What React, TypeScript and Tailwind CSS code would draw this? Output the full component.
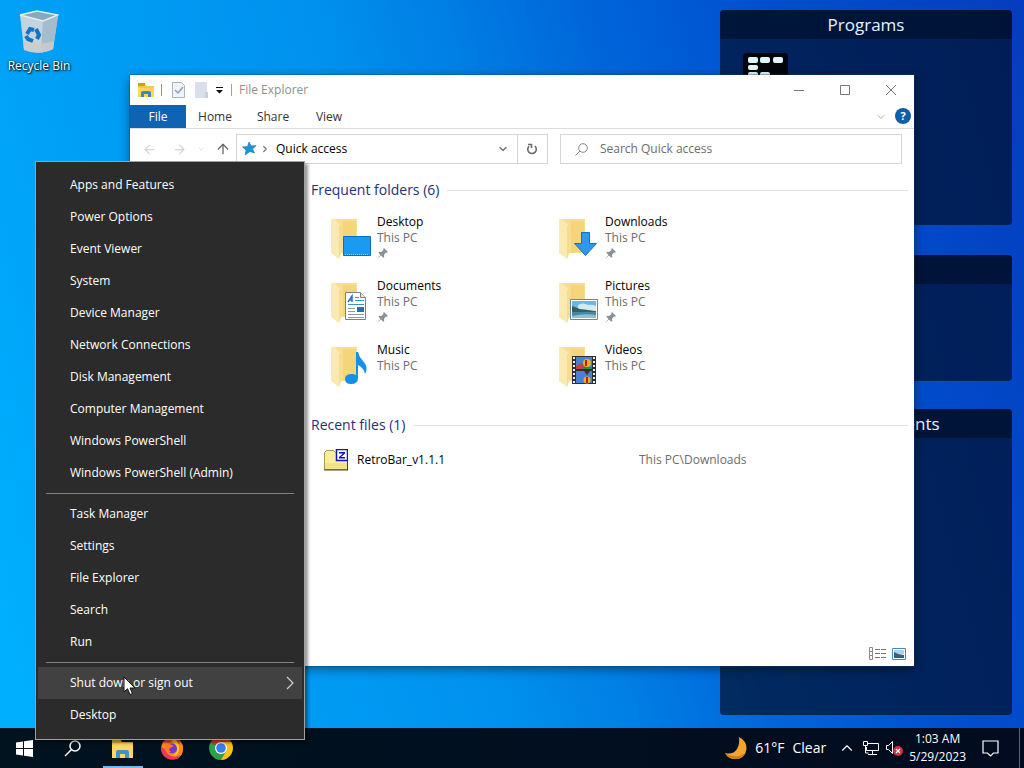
import { ReactNode } from 'react'
import { ArrowLeft, ArrowRight, ArrowUp, ChevronDown, ChevronRight, ChevronUp } from 'lucide-react'

type FolderKind = 'desktop' | 'downloads' | 'documents' | 'pictures' | 'music' | 'videos'

const menuGroups = [
    [
        'Apps and Features',
        'Power Options',
        'Event Viewer',
        'System',
        'Device Manager',
        'Network Connections',
        'Disk Management',
        'Computer Management',
        'Windows PowerShell',
        'Windows PowerShell (Admin)'
    ],
    ['Task Manager', 'Settings', 'File Explorer', 'Search', 'Run'],
    ['Shut down or sign out', 'Desktop']
]

const folders: { name: string; kind: FolderKind; pinned: boolean }[] = [
    { name: 'Desktop', kind: 'desktop', pinned: true },
    { name: 'Downloads', kind: 'downloads', pinned: true },
    { name: 'Documents', kind: 'documents', pinned: true },
    { name: 'Pictures', kind: 'pictures', pinned: true },
    { name: 'Music', kind: 'music', pinned: false },
    { name: 'Videos', kind: 'videos', pinned: false }
]

function RecycleBinIcon() {
    return (
        <svg width="40" height="44" viewBox="0 0 40 44">
            <path d="M1 5 L5 40 Q20 46 34 39 L39 6 L20 10Z" fill="#c3d3df" />
            <path d="M24 9 L39 6 L34 39 L22 43Z" fill="#a5bccd" />
            <path d="M4 31 L5 40 Q20 46 34 39 L35 31 Q20 36 4 31Z" fill="#cfccc9" opacity=".8" />
            <path d="M1 5 L18 1 L39 5 L24 11Z" fill="#88a9bd" stroke="#e6eef4" strokeWidth="1.4" />
            <g fill="none" stroke="#1272c4" strokeWidth="4">
                <path d="M8 24 L11 19 L15 20" />
                <path d="M17 19 L20 25 L18 29" />
                <path d="M14 31 L9 29 L7 26" />
            </g>
        </svg>
    )
}

function ExplorerSmallIcon() {
    return (
        <svg width="16" height="15" viewBox="0 0 16 15">
            <path d="M0 1h7l1 2h8v11H0z" fill="#f6c945" />
            <path d="M0 0h7v3H0z" fill="#d79a1a" />
            <path d="M0 5h16v9H0z" fill="#fbd95f" />
            <path d="M3 14V10q0-2 2-2h6q2 0 2 2v4h-3v-3H6v3z" fill="#3f86bd" />
        </svg>
    )
}

function FolderBase({ children }: { children: ReactNode }) {
    return (
        <svg width="42" height="42" viewBox="0 0 42 42">
            <path d="M3 1h23v34H3z" fill="#f7dd8c" />
            <path d="M12 3h13v31H12z" fill="#f3d071" opacity=".6" />
            <path d="M0 1h3l7 6v28l-2 6L0 35z" fill="#fbeab0" />
            <path d="M8 8l2-1v28l-2 6z" fill="#f4dc92" />
            {children}
        </svg>
    )
}

function FolderIcon({ kind }: { kind: FolderKind }) {
    if (kind === 'desktop') {
        return (
            <FolderBase>
                <path d="M12.500 18.500h27v19h-27z" fill="#1b9af2" stroke="#0b6fc0" />
                <path d="M14 36.500h24" stroke="#8fd0ff" strokeDasharray="1 1" />
            </FolderBase>
        )
    }
    if (kind === 'downloads') {
        return (
            <FolderBase>
                <path d="M22.500 14.500h8v11h7L26.500 37.500 15.500 25.500h7z" fill="#2f98ea" stroke="#1b6fb8" />
            </FolderBase>
        )
    }
    if (kind === 'documents') {
        return (
            <FolderBase>
                <path d="M14.500 10.500h15l5 5v22h-20z" fill="#fff" stroke="#7c8085" />
                <path d="M29.500 10.500v5h5" fill="#e6e8ea" stroke="#7c8085" />
                <path d="M17 20l4-6v6M18.500 18h3" fill="none" stroke="#1f7cc4" strokeWidth="1.500" />
                <path d="M24 15.500h4M24 18.500h9M17 22.500h16" stroke="#3f8fc9" />
                <path d="M17 26.500h7M17 29.500h7M17 32.500h16M17 35.500h16" stroke="#8a9bab" />
                <path d="M26 25h7v5h-7z" fill="#2f6ea3" />
            </FolderBase>
        )
    }
    if (kind === 'pictures') {
        return (
            <FolderBase>
                <path d="M11.500 17.500h27v20h-27z" fill="#fff" stroke="#6d8799" />
                <path d="M13 19h24v9H13z" fill="#6eb5ea" />
                <path d="M19 23q5-3 10 0 4-1 8 1v4H19z" fill="#d3ebf8" />
                <path d="M13 24l8 3 16 2v2H13z" fill="#2f6552" />
                <path d="M13 30h24v6H13z" fill="#4787a5" />
                <path d="M13 34q12-3 24-1v3H13z" fill="#8dbfd0" />
            </FolderBase>
        )
    }
    if (kind === 'music') {
        return (
            <FolderBase>
                <path d="M25 6h2q1 5 5 9 6 6 2 13-1-6-7-9v13q0 6-7 6-6 0-6-5t7-5q2 0 4 1z" fill="#1590e8" />
            </FolderBase>
        )
    }
    return (
        <FolderBase>
            <path d="M13 10h24v28H13z" fill="#2d2f33" />
            <path d="M17 11h16v12H17z" fill="#4a7fd6" />
            <path d="M17 25h16v12H17z" fill="#4a7fd6" />
            <path d="M17 20l6-3 4 3v3H17z" fill="#c4423f" />
            <circle cx="28" cy="17" r="4" fill="#e8b421" />
            <path d="M26 14h2v6h-2z" fill="#a52720" />
            <path d="M24 21h9v2h-9z" fill="#2f8b3c" />
            <circle cx="28" cy="34" r="3.500" fill="#e8b421" />
            <path d="M27 31h2v6h-2z" fill="#a52720" />
            <path d="M25 25h6l-3 4z" fill="#5b2416" />
            <path d="M15 11v27M35 11v27" stroke="#e9edf0" strokeWidth="2" strokeDasharray="2 2" />
        </FolderBase>
    )
}

function PinIcon() {
    return (
        <svg width="11" height="11" viewBox="0 0 11 11" fill="#8a8f94" className="mt-0.5">
            <path d="M7 0l4 4-1 .8-1-.3-2 2.200.2 2-1 1L4 7.500 0 11l3.500-4L1.300 4.800l1-1 2 .2L6.500 2 6.200 1z" />
        </svg>
    )
}

function GroupHeading({ children }: { children: ReactNode }) {
    return (
        <div className="flex h-6 items-center pr-1.5">
            <ChevronDown size={10} className="text-[#404040]" />
            <h2 className="ml-[5px] text-sm leading-6 text-[#1e2f7c]">{children}</h2>
            <div className="ml-2 h-px flex-1 bg-[#e0e2e6]" />
        </div>
    )
}

function TitleBar() {
    return (
        <header className="flex h-[30px] shrink-0 items-center pl-2">
            <ExplorerSmallIcon />
            <div className="ml-[7px] h-3 w-px bg-[#9a9480]" />
            <button aria-label="Properties" className="ml-2.5">
                <svg width="13" height="16" viewBox="0 0 13 16" fill="none">
                    <path d="M.5.5h9l3 3v12H.5z" fill="#f0f4f8" stroke="#a8b4c0" />
                    <path d="M3 8l3 3 5-6" stroke="#8da0b4" strokeWidth="1.500" />
                </svg>
            </button>
            <button aria-label="New folder" className="ml-2.5">
                <svg width="14" height="16" viewBox="0 0 14 16">
                    <path d="M0 0h12v16H0z" fill="#d9e0ea" />
                    <path d="M10 10h3v6h-3z" fill="#c9d0da" />
                </svg>
            </button>
            <button aria-label="Customize Quick Access Toolbar" className="ml-[7px]">
                <svg width="7" height="7" viewBox="0 0 7 7">
                    <path d="M0 0h7v1H0zM0 3h7L3.500 6.500z" fill="#111" />
                </svg>
            </button>
            <div className="ml-2 h-3 w-px bg-[#a0a0a0]" />
            <h1 className="ml-[7px] text-xs text-[#8f8f8f]">File Explorer</h1>
            <div className="ml-auto flex">
                <button aria-label="Minimize" className="flex h-7 w-[46px] items-center justify-center">
                    <svg width="10" height="10" viewBox="0 0 10 10"><path d="M0 5.500h10" stroke="#777" /></svg>
                </button>
                <button aria-label="Maximize" className="flex h-7 w-[46px] items-center justify-center">
                    <svg width="10" height="10" viewBox="0 0 10 10"><path d="M.5.5h9v9h-9z" fill="none" stroke="#777" /></svg>
                </button>
                <button aria-label="Close" className="flex h-7 w-[46px] items-center justify-center">
                    <svg width="10" height="10" viewBox="0 0 10 10"><path d="M0 0l10 10M10 0L0 10" stroke="#777" /></svg>
                </button>
            </div>
        </header>
    )
}

function AddressRow() {
    return (
        <div className="flex shrink-0 items-center pt-[5px] pr-3 pl-3">
            <button aria-label="Back" className="text-[#d4d4d4]"><ArrowLeft size={15} /></button>
            <button aria-label="Forward" className="ml-[15px] text-[#d4d4d4]"><ArrowRight size={15} /></button>
            <button aria-label="Recent locations" className="ml-2.5 text-[#d4d4d4]"><ChevronDown size={8} /></button>
            <button aria-label="Up" className="ml-2.5 text-[#6b6b6b]"><ArrowUp size={16} /></button>
            <div className="ml-[5px] flex h-[30px] flex-[286] items-center border border-[#d6d6d6] pl-1">
                <svg width="16" height="16" viewBox="0 0 16 16">
                    <path d="M8 1l2 4 5-.5-3.500 3.500 2 4-4.500-1.500L4 14l1-5L1.500 6l5-.5z" fill="#1b94dc" stroke="#1272b4" strokeWidth=".6" />
                </svg>
                <ChevronRight size={10} strokeWidth={3} className="ml-[3px] text-[#7a7a7a]" />
                <input aria-label="Address" defaultValue="Quick access" className="ml-1.5 w-0 flex-1 bg-transparent text-xs text-black outline-none" />
                <ChevronDown size={12} strokeWidth={3} className="mr-2 text-[#7a7a7a]" />
            </div>
            <button aria-label="Refresh" className="flex h-[30px] w-[30px] items-center justify-center border border-l-0 border-[#d6d6d6]">
                <svg width="12" height="12" viewBox="0 0 12 12" fill="none" stroke="#6b6b6b" strokeWidth="1.600">
                    <path d="M8.800 3A4.300 4.300 0 1 1 3 3.200" />
                    <path d="M2 1.500h3.500V5" />
                </svg>
            </button>
            <label className="ml-3 flex h-[30px] flex-[338] items-center border border-[#d6d6d6] pl-3.5">
                <svg width="13" height="13" viewBox="0 0 13 13" fill="none" stroke="#858585">
                    <circle cx="8" cy="5" r="4.300" />
                    <path d="M5 8l-4.500 4.500" />
                </svg>
                <input type="search" placeholder="Search Quick access" aria-label="Search" className="ml-3 w-0 flex-1 bg-transparent text-xs outline-none placeholder:text-[#6d6d6d]" />
            </label>
        </div>
    )
}

function ExplorerWindow() {
    return (
        <section className="absolute top-[75px] right-[110px] bottom-[62px] left-[130px] flex flex-col bg-white shadow-[0_0_0_1px_rgba(20,70,120,0.35),0_3px_10px_rgba(0,0,0,0.45)]">
            <TitleBar />
            <nav className="flex h-6 shrink-0 border-b border-[#dcdcdc] text-xs text-[#333]">
                <button className="w-14 bg-[#0f63b3] text-white">File</button>
                <button className="w-[58px]">Home</button>
                <button className="w-[58px]">Share</button>
                <button className="w-[54px]">View</button>
                <button aria-label="Expand the Ribbon" className="ml-auto text-[#aaa]"><ChevronDown size={12} /></button>
                <button aria-label="Help" className="mt-[3px] mr-[3px] ml-2 h-4 w-4 rounded-full bg-[#0d5fa9] text-[11px] leading-4 font-bold text-white">?</button>
            </nav>
            <AddressRow />
            <main className="flex flex-1 flex-col pt-3.5 pl-[166px]">
                <GroupHeading>Frequent folders (6)</GroupHeading>
                <ul className="grid grid-cols-[228px_228px] pt-3 pl-[35px]">
                    {folders.map((f) => (
                        <li key={f.name} className="flex h-16 gap-1">
                            <div className="pt-1"><FolderIcon kind={f.kind} /></div>
                            <div className="text-xs leading-4">
                                <div className="text-black">{f.name}</div>
                                <div className="text-[#6d6d6d]">This PC</div>
                                {f.pinned && <PinIcon />}
                            </div>
                        </li>
                    ))}
                </ul>
                <div className="pt-[7px]">
                    <GroupHeading>Recent files (1)</GroupHeading>
                </div>
                <div className="flex h-10 items-center pt-1.5 pl-7 text-xs">
                    <svg width="24" height="22" viewBox="0 0 24 22">
                        <path d="M.5 3.500l2-2h7l2 2h12v17H.5z" fill="#f9ee9c" stroke="#a89c4a" />
                        <path d="M1 14h22v6H1z" fill="#f3e384" />
                        <path d="M0 21h24M23.500 4v17" stroke="#4a4520" />
                        <path d="M12.500.5h11v11h-11z" fill="#fff" stroke="#1414b8" strokeWidth="1.500" />
                        <path d="M15 3h6v1.500L17 8h4v1.500h-6V8l4-3.500h-4z" fill="#1414b8" />
                    </svg>
                    <span className="ml-[9px] w-[282px] text-black">RetroBar_v1.1.1</span>
                    <span className="text-[#6d6d6d]">This PC\Downloads</span>
                </div>
                <div className="mt-auto flex items-center justify-end gap-1.5 pr-2 pb-1.5">
                    <button aria-label="Details view">
                        <svg width="17" height="13" viewBox="0 0 17 13" fill="none" stroke="#8a8a8a">
                            <path d="M.5.500h3v12h-3zM.5 4.500h3M.5 8.500h3" />
                            <path d="M6 2.500h11M6 6.500h11M6 10.500h11" stroke="#777" strokeDasharray="5 1" />
                        </svg>
                    </button>
                    <button aria-label="Large icons view">
                        <svg width="14" height="12" viewBox="0 0 14 12">
                            <path d="M.5.5h13v11H.5z" fill="#fff" stroke="#4a86b8" />
                            <path d="M2 2h10v4H2z" fill="#a9d2ee" />
                            <path d="M2 4l4 2 6 1v3H2z" fill="#31627c" />
                        </svg>
                    </button>
                </div>
            </main>
        </section>
    )
}

function Fence({ title, className, children }: { title?: string; className: string; children?: ReactNode }) {
    return (
        <section className={`overflow-hidden rounded bg-[#02102c]/70 ${className}`}>
            <h2 className="h-[29px] bg-[#000718]/50 text-center text-[17px] leading-[30px] text-[#e8f1ff]">{title}</h2>
            {children}
        </section>
    )
}

function PowerMenu() {
    return (
        <ul role="menu" className="absolute bottom-7 left-[35px] w-[270px] border border-[#a0a0a0] bg-[#2b2b2b] pt-[7px] pb-2 text-xs text-white shadow-[3px_3px_3px_rgba(0,0,0,0.4)]">
            {menuGroups.map((group, i) => (
                <li key={i} role="none">
                    {i > 0 && <hr className="mx-2.5 my-1 border-[#808080]" />}
                    {group.map((label) => {
                        const active = label === 'Shut down or sign out'
                        return (
                            <button key={label} role="menuitem" className={`mx-0.5 flex h-8 w-[264px] items-center justify-between pr-2 pl-8 ${active ? 'bg-[#414141]' : ''}`}>
                                {label}
                                {active && (
                                    <svg width="8" height="14" viewBox="0 0 8 14" fill="none" stroke="#d0d0d0" strokeWidth="1.200"><path d="M1 1l6 6-6 6" /></svg>
                                )}
                            </button>
                        )
                    })}
                </li>
            ))}
        </ul>
    )
}

function FirefoxIcon() {
    return (
        <svg width="24" height="24" viewBox="0 0 24 24">
            <circle cx="12" cy="12.500" r="11" fill="#f5433f" />
            <path d="M3 6q-3 7 1 12 5 6 12 5 7-2 7-11 0-5-4-8 1 3 0 5-2-5-7-8 0 4-2 6z" fill="#ff8a1f" />
            <path d="M1 11q0 9 8 12 8 2 12-4-5 3-10 1-5-2-6-7z" fill="#f0345a" />
            <path d="M12 1q7 4 7 11t-6 8q7-5 2-11-3-3-3-8z" fill="#ffc832" />
            <circle cx="12" cy="12.500" r="5" fill="#7a35d0" />
            <path d="M6 9q4-2 6 0l2 1-4 2q-2 2 1 4-5 1-6-3z" fill="#ff7a24" />
        </svg>
    )
}

function ChromeIcon() {
    return (
        <svg width="24" height="24" viewBox="0 0 24 24">
            <path d="M12 12L1.610 6A12 12 0 0 1 22.390 6z" fill="#e33b2e" />
            <path d="M12 12L22.390 6A12 12 0 0 1 12 24z" fill="#fbc116" />
            <path d="M12 12L12 24A12 12 0 0 1 1.610 6z" fill="#2da04a" />
            <path d="M12 6h10.390L17.200 15z" fill="#fbc116" />
            <path d="M1.610 6L6.800 9 12 6z" fill="#e33b2e" />
            <path d="M17.200 15L12 24 9 17z" fill="#2da04a" />
            <circle cx="12" cy="12" r="6" fill="#fff" />
            <circle cx="12" cy="12" r="4.800" fill="#3a7de8" />
        </svg>
    )
}

function Taskbar() {
    return (
        <footer className="flex h-10 shrink-0 items-stretch bg-linear-to-r from-[#00131f] to-[#020b1f] text-white">
            <button aria-label="Start" className="flex w-12 items-center justify-center">
                <svg width="17" height="17" viewBox="0 0 17 17" fill="#fff">
                    <path d="M0 2.500l7-1V8H0zM8 1.300L17 0v8H8zM0 9h7v6.500l-7-1zM8 9h9v8l-9-1.300z" />
                </svg>
            </button>
            <button aria-label="Search" className="flex w-12 items-center justify-center">
                <svg width="17" height="17" viewBox="0 0 17 17" fill="none" stroke="#fff" strokeWidth="1.500">
                    <circle cx="11" cy="6" r="5" />
                    <path d="M7.500 9.500L1 16" />
                </svg>
            </button>
            <button aria-label="File Explorer" className="ml-0.5 flex w-[49px] flex-col items-center justify-end">
                <svg width="21" height="19" viewBox="0 0 21 19">
                    <path d="M0 0h8l2 3h11v16H0z" fill="#e9b93c" />
                    <path d="M0 4h21v15H0z" fill="#fbd765" />
                    <path d="M4 19v-6q0-2 2-2h9q2 0 2 2v6h-4v-4H8v4z" fill="#3f93c9" />
                </svg>
                <div className="mt-2 h-0.5 w-10 bg-[#76b9ed]" />
            </button>
            <button aria-label="Firefox" className="flex w-[49px] items-center justify-center"><FirefoxIcon /></button>
            <button aria-label="Chrome" className="flex w-[49px] items-center justify-center"><ChromeIcon /></button>
            <div className="ml-auto flex items-center">
                <button className="flex items-center text-sm">
                    <svg width="22" height="22" viewBox="0 0 22 22">
                        <path d="M14 0Q22 4 21.500 12 20 22 10 22 3 22 0 16 8 18 12 12 15 7 14 0z" fill="#f4a62c" />
                        <path d="M0 16q4 6 11 6 8-1 10-7-5 5-12 4-5 0-9-3z" fill="#d97b19" />
                    </svg>
                    <span className="ml-2">61°F</span>
                    <span className="ml-2">Clear</span>
                </button>
                <button aria-label="Show hidden icons" className="ml-3.5"><ChevronUp size={18} strokeWidth={1.5} className="-mx-0.5" /></button>
                <button aria-label="Network" className="ml-2">
                    <svg width="18" height="14" viewBox="0 0 18 14" fill="none" stroke="#fff">
                        <path d="M6 2.500h10.500v7h-12V6M10.500 10v3M6 13.500h9" />
                        <path d="M1.500.5h4v4h-4zM3.500 5v7h3" />
                    </svg>
                </button>
                <button aria-label="Volume muted" className="ml-1.5">
                    <svg width="17" height="16" viewBox="0 0 17 16" fill="none" stroke="#fff">
                        <path d="M.5 5.500h2l4-4v12l-4-4h-2z" />
                        <circle cx="12" cy="11" r="5" fill="#c8343f" stroke="none" />
                        <path d="M10 9l4 4M14 9l-4 4" strokeWidth="1.200" />
                    </svg>
                </button>
                <button className="ml-1.5 text-center text-xs leading-[18px]">
                    <div>1:03 AM</div>
                    <div>5/29/2023</div>
                </button>
                <button aria-label="Notifications" className="mr-5 ml-4">
                    <svg width="17" height="17" viewBox="0 0 17 17" fill="none" stroke="#fff" strokeWidth="1.200">
                        <path d="M1 1h15v12h-4.500L8.500 16 5.500 13H1z" />
                    </svg>
                </button>
                <button aria-label="Show desktop" className="h-10 w-[5px] border-l border-[#5c6674]" />
            </div>
        </footer>
    )
}

export default function App() {
    return (
        <div className="relative flex h-screen flex-col overflow-hidden bg-[linear-gradient(75deg,#00b2ff_0%,#00a1f7_17%,#0092ee_41%,#0080e4_52%,#0066da_64%,#0050cf_78%,#043dbe_100%)] font-['Open_Sans','Noto_Sans',sans-serif]">
            <div className="relative flex-1">
                <button className="absolute top-2.5 left-0 flex w-[78px] flex-col items-center text-xs text-white [text-shadow:1px_1px_2px_#000,0_0_2px_#000]">
                    <RecycleBinIcon />
                    <span className="mt-1 leading-4">Recycle Bin</span>
                </button>
                <aside className="absolute top-2.5 right-3 w-[292px]">
                    <Fence title="Programs" className="h-[215px]">
                        <svg width="45" height="45" viewBox="0 0 45 45" className="mt-3.5 ml-[23px]">
                            <rect width="45" height="45" rx="4" fill="#02060c" />
                            <g fill="#dff6f8">
                                <rect x="5" y="4" width="10" height="6" rx="2" />
                                <rect x="17" y="4" width="10" height="6" rx="2" />
                                <rect x="30" y="4" width="10" height="6" rx="2" />
                                <rect x="5" y="12" width="10" height="5" rx="2" />
                                <rect x="5" y="19" width="10" height="5" rx="2" />
                                <rect x="17" y="19" width="10" height="5" rx="2" />
                            </g>
                        </svg>
                    </Fence>
                    <Fence className="mt-[30px] h-[126px]" />
                    <Fence title="Files & Documents" className="mt-7 h-[306px]" />
                </aside>
                <ExplorerWindow />
            </div>
            <Taskbar />
            <PowerMenu />
            <svg width="13" height="20" viewBox="0 0 13 20" className="absolute bottom-[72px] left-[123px]">
                <path d="M1 1v15l3.500-3.300L7 18.500l2.500-1L7 12h5z" fill="#fff" stroke="#111" />
            </svg>
        </div>
    )
}
